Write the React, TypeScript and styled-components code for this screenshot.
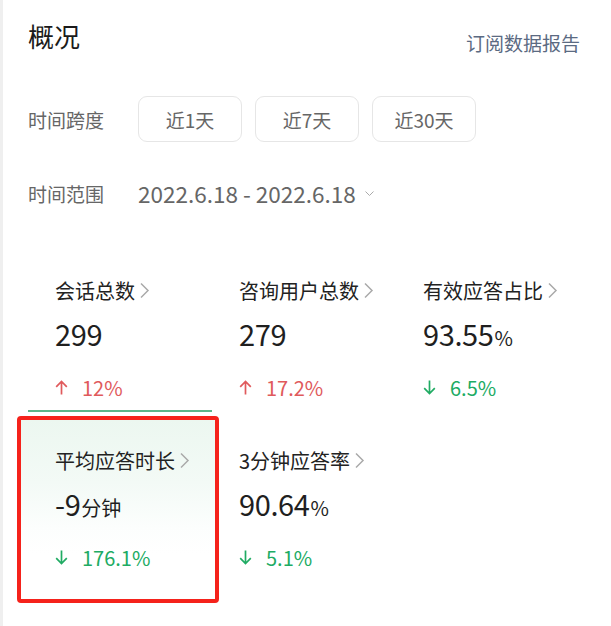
import React from "react";
import styled, { createGlobalStyle } from "styled-components";

const GlobalStyle = createGlobalStyle`
  html, body { margin: 0; padding: 0; background: #fff; }
  body { font-family: "Noto Sans CJK SC", "Noto Sans", sans-serif; }
  * { box-sizing: border-box; }
`;

const Page = styled.div`
  width: 611px;
  height: 626px;
  border-left: 3px solid #efefef;
  padding: 18px 31px 0 25px;
  overflow: hidden;
`;

const Header = styled.div`
  display: flex;
  justify-content: space-between;
  align-items: flex-start;
`;

const Title = styled.h1`
  margin: 0;
  font-size: 26px;
  line-height: 36px;
  font-weight: 400;
  color: #1a1a1a;
`;

const Subscribe = styled.a`
  margin-top: 12px;
  font-size: 19px;
  line-height: 26px;
  color: #5b6a82;
  text-decoration: none;
`;

const FilterRow = styled.div<{ $top: number }>`
  display: flex;
  align-items: center;
  height: 46px;
  margin-top: ${(p) => p.$top}px;
`;

const FilterLabel = styled.div`
  width: 110px;
  flex: none;
  font-size: 19px;
  color: #666;
`;

const Buttons = styled.div`
  display: flex;
  gap: 13px;
`;

const RangeButton = styled.button`
  width: 104px;
  height: 46px;
  border: 1px solid #e6e6e6;
  border-radius: 9px;
  background: #fff;
  font-family: inherit;
  font-size: 19px;
  color: #666;
  padding: 0;
`;

const DateText = styled.div`
  display: flex;
  align-items: center;
  gap: 9px;
  font-size: 22.5px;
  color: #666;
`;

const Grid = styled.div`
  display: grid;
  grid-template-columns: repeat(3, 184px);
  row-gap: 12px;
  margin-top: 38px;
`;

const Cell = styled.div<{ $active?: boolean }>`
  position: relative;
  height: 158px;
  padding: 22px 0 0 27px;
  border-bottom: 2px solid ${(p) => (p.$active ? "#5bb58a" : "transparent")};
`;

const Highlight = styled.div`
  position: absolute;
  left: -11px;
  right: -7px;
  top: -8px;
  bottom: -23px;
  border: 4px solid #f5221b;
  border-radius: 4px;
  background: linear-gradient(180deg, #ecf7f0 0%, #f3faf6 35%, #fcfefd 60%, #fff 75%);
  z-index: 0;
`;

const CellBody = styled.div`
  position: relative;
  z-index: 1;
`;

const Label = styled.div`
  display: flex;
  align-items: center;
  gap: 4px;
  height: 28px;
  font-size: 20px;
  color: #222;
`;

const Value = styled.div`
  margin-top: 8px;
  height: 44px;
  display: flex;
  align-items: baseline;
  font-size: 29px;
  letter-spacing: -0.4px;
  color: #1f1f1f;
`;

const Unit = styled.span`
  font-size: 20px;
  margin-left: 1px;
  letter-spacing: 0;
`;

const Change = styled.div<{ $up: boolean }>`
  margin-top: 17px;
  display: flex;
  align-items: center;
  gap: 14px;
  font-size: 20px;
  height: 28px;
  color: ${(p) => (p.$up ? "#e05a5c" : "#20ab63")};
`;

const Chevron = () => (
  <svg width="11" height="17" viewBox="0 0 11 17" fill="none">
    <path d="M2 1.5 L9 8.5 L2 15.5" stroke="#aaa" strokeWidth="1.5" />
  </svg>
);

const SmallDown = () => (
  <svg width="9" height="5" viewBox="0 0 9 5" fill="none">
    <path d="M0.5 0.5 L4.5 4.5 L8.5 0.5" stroke="#aaa" strokeWidth="1" />
  </svg>
);

const Arrow = ({ up }: { up: boolean }) => (
  <svg width="13" height="15" viewBox="0 0 13 15" fill="none">
    {up ? (
      <path d="M6.5 14.5 V1.5 M1.2 6.8 L6.5 1.5 L11.8 6.8" stroke="currentColor" strokeWidth="1.7" />
    ) : (
      <path d="M6.5 0.5 V13.5 M1.2 8.2 L6.5 13.5 L11.8 8.2" stroke="currentColor" strokeWidth="1.7" />
    )}
  </svg>
);

type Metric = {
  label: string;
  value: string;
  unit?: string;
  up: boolean;
  change: string;
  active?: boolean;
  highlight?: boolean;
};

const metrics: Metric[] = [
  { label: "会话总数", value: "299", up: true, change: "12%", active: true },
  { label: "咨询用户总数", value: "279", up: true, change: "17.2%" },
  { label: "有效应答占比", value: "93.55", unit: "%", up: false, change: "6.5%" },
  { label: "平均应答时长", value: "-9", unit: "分钟", up: false, change: "176.1%", highlight: true },
  { label: "3分钟应答率", value: "90.64", unit: "%", up: false, change: "5.1%" },
];

export default function App() {
  return (
    <>
      <GlobalStyle />
      <Page>
        <Header>
          <Title>概况</Title>
          <Subscribe>订阅数据报告</Subscribe>
        </Header>
        <FilterRow $top={40}>
          <FilterLabel>时间跨度</FilterLabel>
          <Buttons>
            <RangeButton>近1天</RangeButton>
            <RangeButton>近7天</RangeButton>
            <RangeButton>近30天</RangeButton>
          </Buttons>
        </FilterRow>
        <FilterRow $top={28}>
          <FilterLabel>时间范围</FilterLabel>
          <DateText>
            2022.6.18 - 2022.6.18
            <SmallDown />
          </DateText>
        </FilterRow>
        <Grid>
          {metrics.map((m) => (
            <Cell key={m.label} $active={m.active}>
              {m.highlight && <Highlight />}
              <CellBody>
                <Label>
                  {m.label}
                  <Chevron />
                </Label>
                <Value>
                  {m.value}
                  {m.unit && <Unit>{m.unit}</Unit>}
                </Value>
                <Change $up={m.up}>
                  <Arrow up={m.up} />
                  {m.change}
                </Change>
              </CellBody>
            </Cell>
          ))}
        </Grid>
      </Page>
    </>
  );
}
